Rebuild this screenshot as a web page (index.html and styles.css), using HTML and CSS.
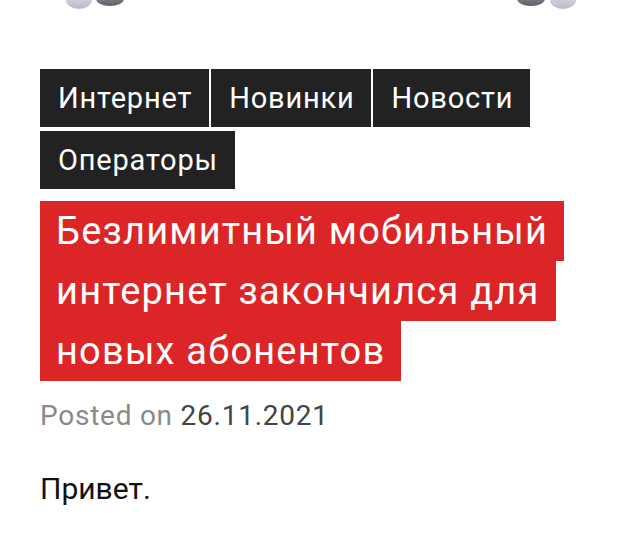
FILE: index.html
```html
<!DOCTYPE html>
<html lang="ru">
<head>
<meta charset="utf-8">
<link rel="stylesheet" href="styles.css">
</head>
<body>
<div class="hero">
  <svg class="hero-art" width="640" height="10" viewBox="0 0 640 10">
    <defs>
      <linearGradient id="lite" x1="0" y1="0" x2="0" y2="1">
        <stop offset="0" stop-color="#e4e4ee"/>
        <stop offset="1" stop-color="#b9b9c8"/>
      </linearGradient>
      <linearGradient id="dark" x1="0" y1="0" x2="0" y2="1">
        <stop offset="0" stop-color="#9a9aa2"/>
        <stop offset="1" stop-color="#5d5d66"/>
      </linearGradient>
    </defs>
    <ellipse cx="79" cy="0" rx="13" ry="9" fill="url(#lite)"/>
    <ellipse cx="110" cy="-1" rx="14" ry="7" fill="url(#dark)"/>
    <ellipse cx="531" cy="-1" rx="14" ry="7" fill="url(#dark)"/>
    <ellipse cx="563" cy="0" rx="13" ry="9" fill="url(#lite)"/>
  </svg>
</div>
<main class="article">
  <nav class="tags">
    <a class="tag">Интернет</a>
    <a class="tag">Новинки</a>
    <a class="tag">Новости</a>
    <a class="tag">Операторы</a>
  </nav>
  <h1 class="title"><span class="title-text">Безлимитный мобильный интернет закончился для новых абонентов</span></h1>
  <p class="meta"><span class="meta-label">Posted on</span> <span class="meta-date">26.11.2021</span></p>
  <p class="body-text">Привет.</p>
</main>
</body>
</html>
```
FILE: styles.css
```css
html, body {
  margin: 0;
  padding: 0;
  background: #fff;
}
body {
  font-family: Roboto, "Noto Sans", Arial, sans-serif;
  color: #111;
  width: 640px;
  overflow: hidden;
}
.hero {
  height: 9px;
  overflow: hidden;
}
.hero-art {
  display: block;
}
.article {
  padding: 60px 40px 0;
}
.tags {
  display: flex;
  flex-wrap: wrap;
  gap: 4px 2px;
}
.tag {
  display: block;
  background: #222;
  color: #fff;
  font-size: 29px;
  letter-spacing: 0.8px;
  line-height: 58px;
  height: 58px;
  padding: 0 17px 0 18px;
  text-decoration: none;
}
.title {
  margin: 12px 0 0;
  font-size: 38px;
  letter-spacing: 1.2px;
  font-weight: 400;
  line-height: 60px;
}
.title-text {
  background: #dc2526;
  color: #fff;
  padding: 8px 16px;
  -webkit-box-decoration-break: clone;
  box-decoration-break: clone;
}
.meta {
  margin: 17px 0 0;
  font-size: 28px;
  letter-spacing: 0.75px;
  line-height: 36px;
}
.meta-label {
  color: #8a8a8a;
}
.meta-date {
  color: #444;
}
.body-text {
  margin: 37px 0 0;
  font-size: 30px;
  line-height: 36px;
  color: #111;
}
```
